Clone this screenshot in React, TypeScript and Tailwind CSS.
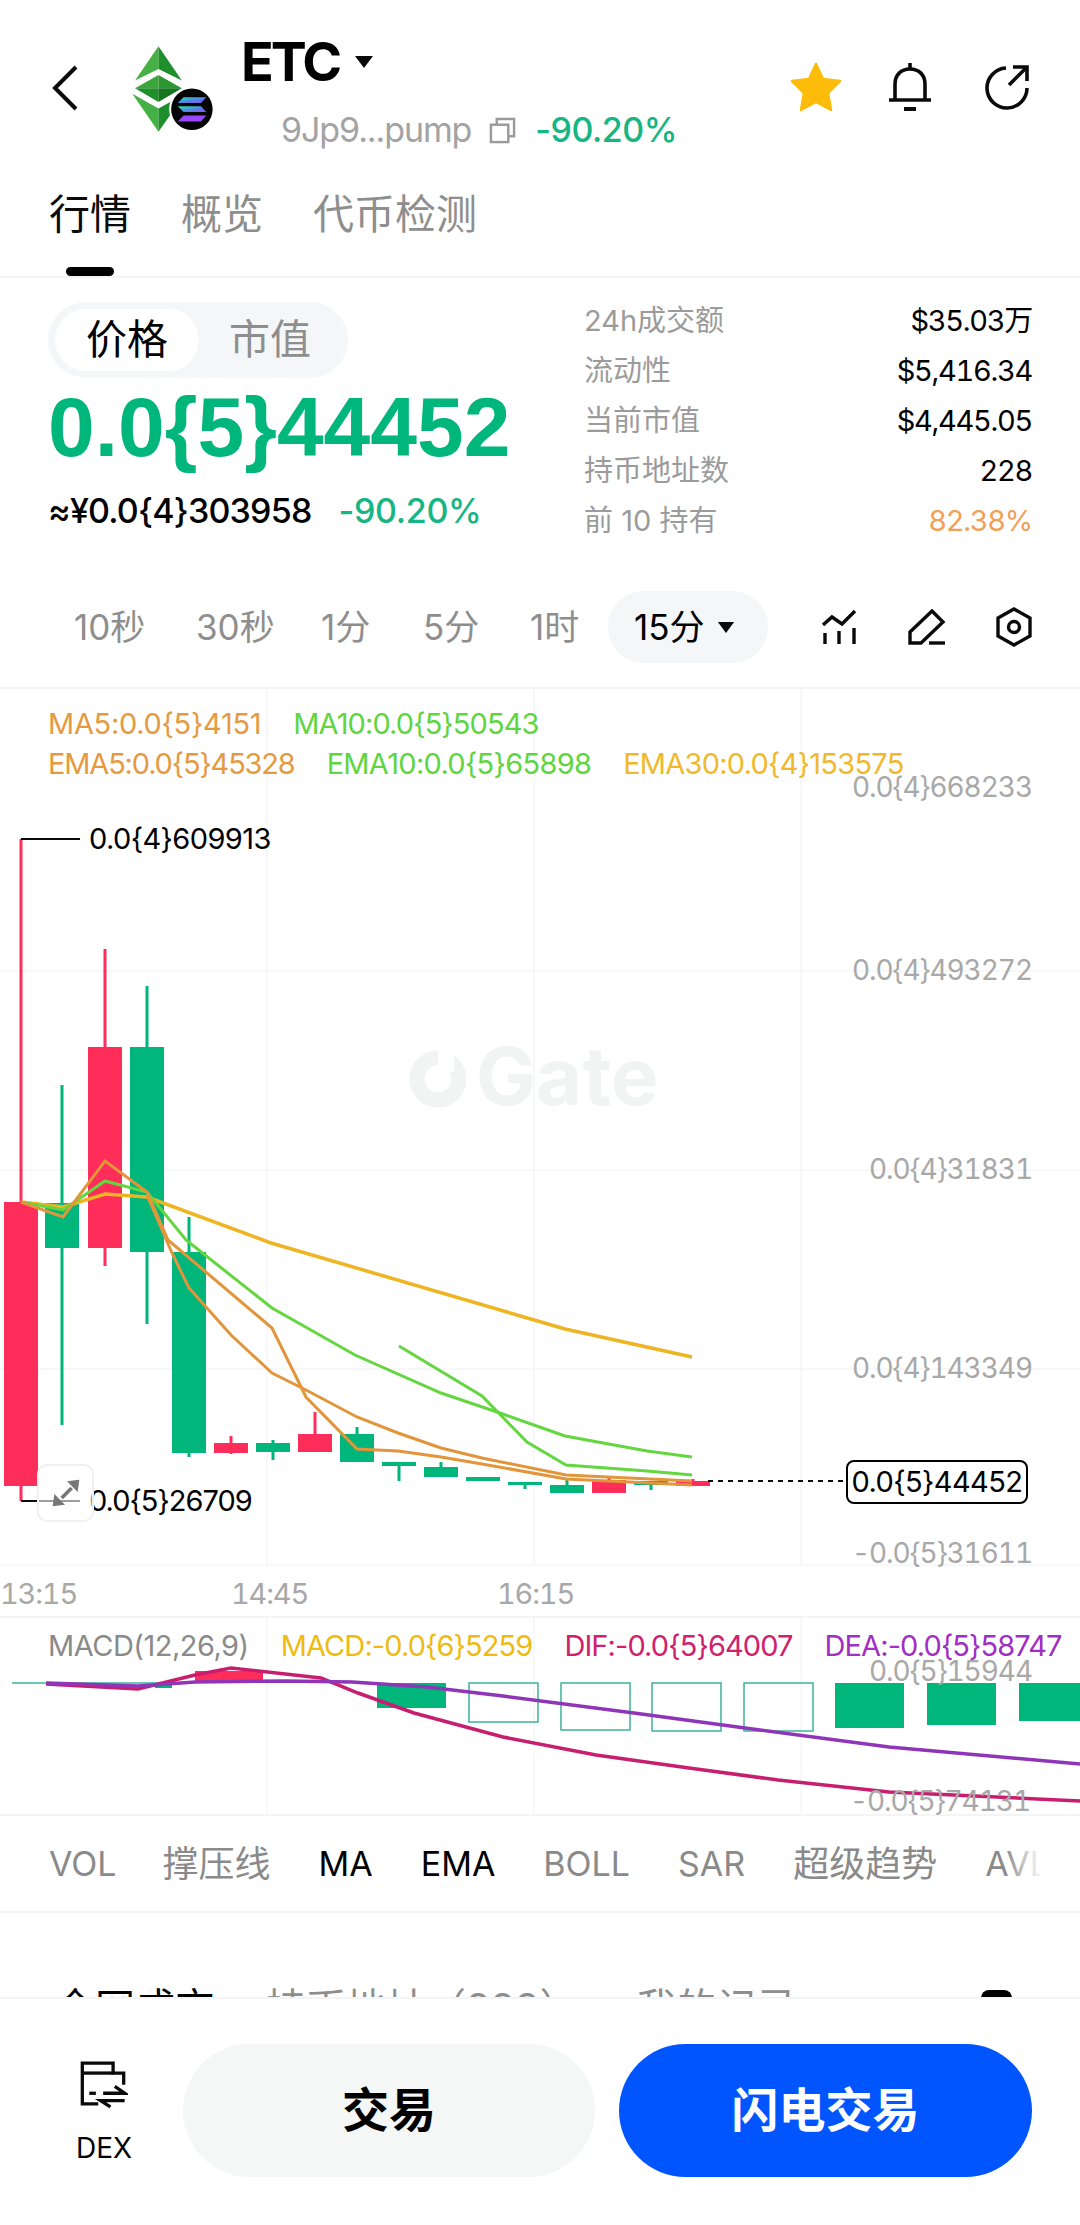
import React from 'react';

const GREEN = '#00b67a';
const RED = '#ff2d5a';

// x centre, body top, body bottom, wick top, wick bottom
const candles: { x: number; top: number; bottom: number; high: number; low: number; up?: boolean }[] = [
    { x: 21, top: 1202, bottom: 1486, high: 839, low: 1501, up: true },
    { x: 62, top: 1203, bottom: 1248, high: 1085, low: 1425 },
    { x: 105, top: 1047, bottom: 1248, high: 949, low: 1266, up: true },
    { x: 147, top: 1047, bottom: 1252, high: 986, low: 1324 },
    { x: 189, top: 1252, bottom: 1453, high: 1217, low: 1457 },
    { x: 231, top: 1443, bottom: 1453, high: 1436, low: 1454, up: true },
    { x: 273, top: 1443, bottom: 1452, high: 1440, low: 1460 },
    { x: 315, top: 1434, bottom: 1452, high: 1412, low: 1452, up: true },
    { x: 357, top: 1434, bottom: 1462, high: 1427, low: 1462 },
    { x: 399, top: 1462, bottom: 1466, high: 1462, low: 1481 },
    { x: 441, top: 1467, bottom: 1477, high: 1462, low: 1477 },
    { x: 483, top: 1477, bottom: 1481, high: 1477, low: 1481 },
    { x: 525, top: 1482, bottom: 1485, high: 1482, low: 1489 },
    { x: 567, top: 1485, bottom: 1493, high: 1478, low: 1493 },
    { x: 609, top: 1480, bottom: 1493, high: 1478, low: 1493, up: true },
    { x: 651, top: 1481, bottom: 1485, high: 1481, low: 1490 },
    { x: 693, top: 1481, bottom: 1486, high: 1479, low: 1486, up: true },
];

const ma5 = '21,1202 63,1217 105,1161 147,1192 168,1240 272,1328 306,1397 357,1449 398,1451 441,1457 482,1464 566,1479 692,1485';
const ema5 = '147,1195 172,1253 189,1288 231,1335 272,1373 306,1390 357,1417 398,1433 441,1448 482,1458 566,1475 692,1481';
const ema10 = '21,1202 63,1210 105,1181 147,1192 186,1240 272,1308 355,1355 441,1393 500,1413 565,1436 647,1451 692,1457';
const ma10 = '399,1346 482,1396 527,1442 566,1465 647,1471 692,1475';
const ema30 = '21,1202 63,1207 105,1194 147,1197 271,1243 565,1329 692,1357';
const dif = '46,1684 138,1689 195,1675 231,1668 321,1678 358,1693 414,1713 503,1737 596,1755 689,1768 778,1780 889,1792 1080,1801';
const dea = '46,1683 138,1686 195,1682 286,1681 352,1682 427,1687 503,1696 634,1713 745,1728 889,1747 1080,1764';

const macdHollow = [
    { x: 469, h: 39 },
    { x: 561, h: 47 },
    { x: 652, h: 48 },
    { x: 744, h: 48 },
];
const macdSolid = [
    { x: 377, w: 69, h: 25 },
    { x: 835, w: 69, h: 45 },
    { x: 927, w: 69, h: 42 },
    { x: 1019, w: 61, h: 38 },
];

function EtcLogo() {
    return (
        <svg viewBox="90 70 260 275" className="w-[87px] h-[92px] shrink-0 mt-[43px] ml-[52px]">
            <defs>
                <linearGradient id="sol" x1="0" y1="0" x2="1" y2="1">
                    <stop offset="0" stopColor="#2fe8b0" />
                    <stop offset="0.5" stopColor="#4a8fe0" />
                    <stop offset="1" stopColor="#9a45ff" />
                </linearGradient>
            </defs>
            <polygon points="175,80 105,182 175,148" fill="#45b044" />
            <polygon points="175,80 245,182 175,148" fill="#1f8f2d" />
            <polygon points="175,166 105,205 175,205" fill="#3aa63a" />
            <polygon points="175,166 245,205 175,205" fill="#2a982e" />
            <polygon points="105,205 175,246 175,205" fill="#1f8f2a" />
            <polygon points="245,205 175,246 175,205" fill="#16761f" />
            <polygon points="97,222 175,266 175,335" fill="#45b044" />
            <polygon points="255,222 175,266 175,335" fill="#1f8f2d" />
            <circle cx="275" cy="268" r="68" fill="#fff" />
            <circle cx="275" cy="268" r="62" fill="#050505" />
            <polygon points="250,232 318,232 302,249 233,249" fill="url(#sol)" />
            <polygon points="233,259 302,259 318,276 250,276" fill="url(#sol)" />
            <polygon points="250,287 318,287 302,305 233,305" fill="#9a45ff" />
        </svg>
    );
}

function Caret({ className }: { className: string }) {
    return (
        <svg viewBox="0 0 20 14" className={className}>
            <polygon points="1,1 19,1 10,13" fill="#0a0a0a" />
        </svg>
    );
}

export default function App() {
    return (
        <div className="w-[1080px] h-[2225px] overflow-hidden bg-white text-black font-['Inter','Noto_Sans_CJK_SC',sans-serif]">
            {/* Header */}
            <div className="flex items-start h-[135px]">
                <svg viewBox="0 0 26 46" className="w-[26px] h-[46px] mt-[65px] ml-[52px] shrink-0" fill="none" stroke="#0a0a0a" strokeWidth="4">
                    <polyline points="24,2 3,23 24,44" />
                </svg>
                <EtcLogo />
                <div className="ml-[24px] flex flex-col">
                    <div className="flex items-center h-[62px] mt-[31px]">
                        <span className="text-[54px] leading-[62px] font-bold tracking-[-3px]">ETC</span>
                        <Caret className="w-[20px] h-[14px] ml-[15px]" />
                    </div>
                    <div className="flex items-center ml-[40px] h-[40px] mt-[17px] text-[34px] leading-[40px]">
                        <span className="text-[#a3a3a3] tracking-[-1.1px]">9Jp9...pump</span>
                        <svg viewBox="0 0 28 28" className="w-[27px] h-[27px] ml-[18px]" fill="none" stroke="#9a9a9a" strokeWidth="2.5">
                            <rect x="2" y="8" width="18" height="18" />
                            <polyline points="8,8 8,2 26,2 26,20 20,20" />
                        </svg>
                        <span className="ml-[19px] text-[#16b584] font-medium tracking-[-0.5px]">-90.20%</span>
                    </div>
                </div>
                <div className="ml-auto mr-[50px] mt-[62px] flex items-center gap-[52px]">
                    <svg viewBox="0 0 52 50" className="w-[52px] h-[50px] -mr-[6px]">
                        <path d="M26 2 L33 17 L50 19 L38 31 L41 48 L26 40 L11 48 L14 31 L2 19 L19 17 Z" fill="#fdbb0a" stroke="#fdbb0a" strokeWidth="2.5" strokeLinejoin="round" />
                    </svg>
                    <svg viewBox="0 0 44 50" className="w-[44px] h-[50px]" fill="none" stroke="#0a0a0a" strokeWidth="3.6">
                        <path d="M7 38 V22 C7 13 13 7 22 7 C31 7 37 13 37 22 V38" />
                        <path d="M1 38 H43" />
                        <path d="M22 1 V7" />
                        <path d="M16 47 H28" strokeWidth="4" />
                    </svg>
                    <svg viewBox="0 0 46 46" className="w-[46px] h-[46px]" fill="none" stroke="#0a0a0a" strokeWidth="3.6">
                        <path d="M22 4 A20 20 0 1 0 43 24" />
                        <path d="M25 21 L42 4" />
                        <path d="M29 3 H43 V17" />
                    </svg>
                </div>
            </div>

            {/* Tabs */}
            <div className="h-[143px] border-b-2 border-[#f3f4f5] pl-[49px] pt-[55px] flex gap-[50px] text-[41px] leading-[48px] relative">
                <span className="text-[#0a0a0a]">行情</span>
                <span className="text-[#8e8e8e]">概览</span>
                <span className="text-[#8e8e8e]">代币检测</span>
                <div className="absolute left-[66px] bottom-0 w-[48px] h-[9px] rounded-full bg-black" />
            </div>

            {/* Price block */}
            <div className="flex h-[225px] pl-[48px] pr-[48px] pt-[24px]">
                <div className="w-[536px] shrink-0">
                    <div className="w-[300px] h-[76px] rounded-full bg-[#f5f6f7] flex items-center p-[7px] text-[41px]">
                        <div className="w-[144px] h-[62px] rounded-full bg-white flex items-center justify-center">价格</div>
                        <div className="flex-1 text-center text-[#8e8e8e]">市值</div>
                    </div>
                    <div className="text-[84px] leading-[90px] font-bold font-['Liberation_Sans',sans-serif] text-[#00b67a] mt-[4px] whitespace-nowrap">0.0{'{5}'}44452</div>
                    <div className="flex items-center text-[34px] leading-[40px] mt-[19px] font-medium whitespace-nowrap">
                        <span className="tracking-[-0.8px]">≈¥0.0{'{4}'}303958</span>
                        <span className="ml-[27px] text-[#16b584] tracking-[-0.3px]">-90.20%</span>
                    </div>
                </div>
                <div className="flex-1 flex flex-col text-[29px] leading-[50px] -mt-[6px]">
                    {[
                        ['24h成交额', '$35.03万', 'text-black'],
                        ['流动性', '$5,416.34', 'text-black'],
                        ['当前市值', '$4,445.05', 'text-black'],
                        ['持币地址数', '228', 'text-black'],
                        ['前 10 持有', '82.38%', 'text-[#f2a055]'],
                    ].map(([label, value, color]) => (
                        <div key={label} className="flex justify-between h-[50.5px]">
                            <span className="text-[#9b9b9b]">{label}</span>
                            <span className={`${color} tracking-[-1.3px] tabular-nums`}>{value}</span>
                        </div>
                    ))}
                </div>
            </div>

            {/* Timeframes */}
            <div className="h-[186px] border-b-2 border-[#f3f4f5] pt-[88px] pl-[74px] text-[35px] text-[#8e8e8e]">
                <div className="flex items-center">
                    <span className="w-[122px]">10秒</span>
                    <span className="w-[125px]">30秒</span>
                    <span className="w-[102px]">1分</span>
                    <span className="w-[107px]">5分</span>
                    <span className="w-[78px]">1时</span>
                    <div className="w-[160px] h-[72px] rounded-full bg-[#f5f6f7] flex items-center pl-[26px] text-black">
                        15分
                        <Caret className="w-[18px] h-[13px] ml-[12px]" />
                    </div>
                    <svg viewBox="0 0 36 36" className="w-[36px] h-[36px] ml-[54px]" fill="none" stroke="#0a0a0a" strokeWidth="3.4">
                        <polyline points="1,16 10,8 20,15 33,2" />
                        <path d="M3 24 V35 M17 22 V35 M32 19 V35" />
                    </svg>
                    <svg viewBox="0 0 38 36" className="w-[38px] h-[36px] ml-[50px]" fill="none" stroke="#0a0a0a" strokeWidth="3.4">
                        <path d="M24 2 L35 13 L13 34 H2 V23 Z" />
                        <path d="M21 34 H37" />
                    </svg>
                    <svg viewBox="0 0 36 40" className="w-[36px] h-[40px] ml-[50px]" fill="none" stroke="#0a0a0a" strokeWidth="3.4">
                        <polygon points="18,2 34,11 34,29 18,38 2,29 2,11" />
                        <circle cx="18" cy="20" r="5.5" />
                    </svg>
                </div>
            </div>

            {/* Main chart */}
            <div className="relative h-[929px] border-b-2 border-[#f3f4f5]">
                <svg viewBox="0 689 1080 929" className="absolute inset-0 w-[1080px] h-[929px]" fill="none">
                    <path d="M267 689 V1565 M534 689 V1565 M801 689 V1565 M0 971 H1080 M0 1170 H1080 M0 1369 H1080 M0 1565 H1080" stroke="#f4f6f7" strokeWidth="1.5" />
                    {/* watermark */}
                    <circle cx="438" cy="1079" r="21" stroke="#f2f4f4" strokeWidth="15" />
                    <rect x="438" y="1048" width="16" height="24" fill="#fff" />
                    {candles.map((c) => (
                        <g key={c.x}>
                            <rect x={c.x - 1.5} y={c.high} width="3" height={c.low - c.high} fill={c.up ? RED : GREEN} />
                            <rect x={c.x - 17} y={c.top} width="34" height={c.bottom - c.top} fill={c.up ? RED : GREEN} />
                        </g>
                    ))}
                    <polyline points={ema30} stroke="#eeb422" strokeWidth="3.5" />
                    <polyline points={ema10} stroke="#63d640" strokeWidth="3" />
                    <polyline points={ma10} stroke="#63d640" strokeWidth="3" />
                    <polyline points={ema5} stroke="#e2953a" strokeWidth="3" />
                    <polyline points={ma5} stroke="#e2953a" strokeWidth="3" />
                    <path d="M21 839 H80 M21 1501 H80" stroke="#0a0a0a" strokeWidth="2" />
                    <path d="M708 1481 H847" stroke="#0a0a0a" strokeWidth="2" strokeDasharray="5 5" />
                </svg>

                <div className="relative pl-[48px] pt-[15px] text-[29px] leading-[40px] whitespace-nowrap">
                    <div className="flex gap-[32px] text-[#e59a3f]">
                        <span className="tracking-[-0.3px]">MA5:0.0{'{5}'}4151</span>
                        <span className="text-[#5fd540] tracking-[-0.9px]">MA10:0.0{'{5}'}50543</span>
                    </div>
                    <div className="flex gap-[32px] text-[#e59a3f]">
                        <span className="tracking-[-1.17px]">EMA5:0.0{'{5}'}45328</span>
                        <span className="text-[#5fd540] tracking-[-0.7px]">EMA10:0.0{'{5}'}65898</span>
                        <span className="text-[#f0b92c] tracking-[-0.75px]">EMA30:0.0{'{4}'}153575</span>
                    </div>
                </div>

                <span className="absolute left-[476px] top-[342px] text-[80px] leading-[90px] font-bold text-[#f2f4f4]">Gate</span>

                {/* y axis */}
                <div className="text-[28px] leading-[36px] text-[#a8a8a8] tracking-[-1.06px] tabular-nums">
                    <span className="absolute right-[48px] top-[80px]">0.0{'{4}'}668233</span>
                    <span className="absolute right-[48px] top-[263px]">0.0{'{4}'}493272</span>
                    <span className="absolute right-[48px] top-[462px]">0.0{'{4}'}31831</span>
                    <span className="absolute right-[48px] top-[661px]">0.0{'{4}'}143349</span>
                    <span className="absolute right-[48px] top-[846px]">-0.0{'{5}'}31611</span>
                </div>

                {/* x axis */}
                <div className="text-[29px] leading-[36px] text-[#a8a8a8] tracking-[-1.2px] tabular-nums">
                    <span className="absolute left-0 top-[887px]">13:15</span>
                    <span className="absolute left-[231px] top-[887px]">14:45</span>
                    <span className="absolute left-[497px] top-[887px]">16:15</span>
                </div>

                <span className="absolute left-[89px] top-[132px] text-[29px] leading-[36px] tracking-[-0.6px]">0.0{'{4}'}609913</span>
                <span className="absolute left-[89px] top-[794px] text-[29px] leading-[36px] tracking-[-1px]">0.0{'{5}'}26709</span>
                <div className="absolute left-[846px] top-[771px] w-[182px] h-[44px] border-2 border-black rounded-[8px] bg-white flex items-center justify-center text-[29px] tracking-[-0.6px]">
                    0.0{'{5}'}44452
                </div>
                <div className="absolute left-[37px] top-[775px] w-[57px] h-[58px] rounded-[10px] border-2 border-[#f0f0f0] bg-white/60 flex items-center justify-center">
                    <svg viewBox="90 80 96 96" className="w-[32px] h-[32px]" fill="#777">
                        <polygon points="178,88 141,93 173,125" />
                        <polygon points="98,168 135,163 103,131" />
                        <path d="M125 143 L155 113" stroke="#777" strokeWidth="11" fill="none" />
                    </svg>
                </div>
            </div>

            {/* MACD */}
            <div className="relative h-[198px] border-b-2 border-[#f3f4f5]">
                <svg viewBox="0 1618 1080 198" className="absolute inset-0 w-[1080px] h-[198px]" fill="none">
                    <path d="M267 1618 V1816 M534 1618 V1816 M801 1618 V1816" stroke="#f4f6f7" strokeWidth="1.5" />
                    <path d="M12 1683 H168" stroke="#3cb39a" strokeWidth="1.5" />
                    <rect x="155" y="1683" width="17" height="5" fill={GREEN} />
                    <rect x="195" y="1671" width="68" height="12" fill={RED} />
                    {macdSolid.map((b) => (
                        <rect key={b.x} x={b.x} y="1683" width={b.w} height={b.h} fill={GREEN} />
                    ))}
                    {macdHollow.map((b) => (
                        <rect key={b.x} x={b.x} y="1683" width="69" height={b.h} stroke="#3cb39a" strokeWidth="1.5" />
                    ))}
                    <polyline points={dif} stroke="#c81e70" strokeWidth="3.5" />
                    <polyline points={dea} stroke="#8e35b8" strokeWidth="3.5" />
                </svg>
                <div className="relative flex gap-[32px] pl-[48px] pt-[10px] text-[29px] leading-[36px] whitespace-nowrap tracking-[-0.9px]">
                    <span className="text-[#8a8a8a] tracking-[-0.5px]">MACD(12,26,9)</span>
                    <span className="text-[#eebb12]">MACD:-0.0{'{6}'}5259</span>
                    <span className="text-[#d0206e]">DIF:-0.0{'{5}'}64007</span>
                    <span className="text-[#a02fc4]">DEA:-0.0{'{5}'}58747</span>
                </div>
                <span className="absolute right-[48px] top-[35px] text-[28px] leading-[36px] text-[#a8a8a8] tracking-[-1.06px] tabular-nums">0.0{'{5}'}15944</span>
                <span className="absolute right-[50px] top-[165px] text-[28px] leading-[36px] text-[#a8a8a8] tracking-[-1.06px] tabular-nums">-0.0{'{5}'}74131</span>
            </div>

            {/* Indicators */}
            <div className="relative h-[97px] border-b-2 border-[#f3f4f5] flex items-center pl-[49px] gap-[48px] text-[34px] text-[#8a8a8a] whitespace-nowrap overflow-hidden">
                <span className="-mr-[2px]">VOL</span>
                <span className="text-[36px]">撑压线</span>
                <span className="text-black">MA</span>
                <span className="text-black">EMA</span>
                <span>BOLL</span>
                <span>SAR</span>
                <span className="text-[36px]">超级趋势</span>
                <span>AVL</span>
                <div className="absolute right-0 top-0 bottom-0 w-[75px] bg-gradient-to-r from-transparent to-white to-50%" />
            </div>

            {/* Tabs cut off by the bottom bar */}
            <div className="h-[84px] overflow-hidden pt-[71px] pl-[55px] pr-[68px] flex text-[40px] leading-[48px] whitespace-nowrap">
                <span>全网成交</span>
                <span className="ml-[51px] text-[#8e8e8e]">持币地址（228）</span>
                <span className="ml-[57px] text-[#8e8e8e]">我的记录</span>
                <div className="ml-auto mt-[6px] w-[31px] h-[31px] rounded-[8px] bg-black" />
            </div>

            {/* Bottom bar */}
            <div className="h-[228px] border-t-2 border-[#f3f4f5] bg-white flex pt-[45px] pl-[72px] pr-[48px]">
                <div className="w-[64px] flex flex-col items-center shrink-0">
                    <svg viewBox="60 55 145 150" className="w-[48px] h-[50px] mt-[15px]" fill="none" stroke="#0a0a0a" strokeWidth="10">
                        <path d="M115 190 H67 V67 H160 V97 H192 V132" />
                        <path d="M67 97 H160" />
                        <path d="M88 158 H108" />
                        <path d="M130 158 H195 L165 137" />
                        <path d="M195 180 H122 L152 199" />
                    </svg>
                    <span className="text-[28px] leading-[34px] mt-[22px]">DEX</span>
                </div>
                <div className="ml-[47px] w-[412px] h-[133px] rounded-full bg-[#f5f6f6] flex items-center justify-center text-[47px] font-bold">交易</div>
                <div className="ml-[24px] w-[413px] h-[133px] rounded-full bg-[#0055ff] flex items-center justify-center text-[47px] font-bold text-white">闪电交易</div>
            </div>
        </div>
    );
}
